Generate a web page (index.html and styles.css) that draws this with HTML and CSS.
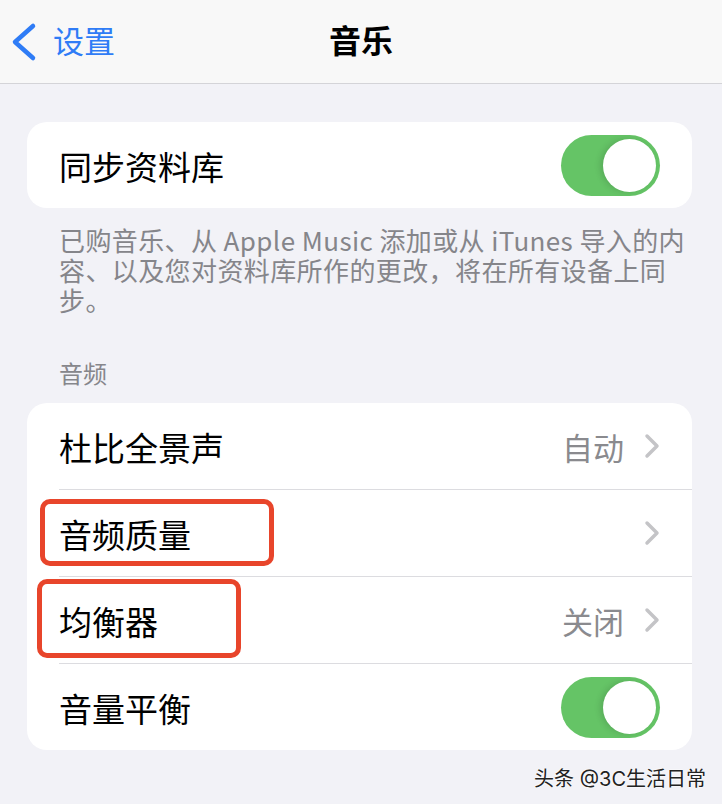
FILE: index.html
```html
<!DOCTYPE html>
<html lang="zh-CN">
<head>
<meta charset="UTF-8" />
<meta name="viewport" content="width=device-width, initial-scale=1.0" />
<title>音乐</title>
<link rel="stylesheet" href="styles.css">
</head>
<body>

<!-- Верхняя навигация -->
<header class="navbar">
  <a class="back" href="#settings">
    <svg class="back-icon" viewBox="0 0 26 40" width="26" height="40">
      <polyline points="22,4 4,20 22,36" />
    </svg>
    <span>设置</span>
  </a>
  <h1 class="title">音乐</h1>
  <span></span>
</header>

<main class="settings">

  <section class="group group-sync">
    <div class="card">
      <div class="row">
        <span class="label">同步资料库</span>
        <span class="switch on"><span class="knob"></span></span>
      </div>
    </div>
    <p class="group-footer">已购音乐、从 Apple Music 添加或从 iTunes 导入的内容、以及您对资料库所作的更改，将在所有设备上同步。</p>
  </section>

  <section class="group group-audio">
    <h2 class="group-header">音频</h2>
    <div class="card">
      <div class="row">
        <span class="label">杜比全景声</span>
        <span class="detail">自动<svg class="chevron" viewBox="0 0 16 26" width="16" height="26"><polyline points="3,3 13,13 3,23" /></svg></span>
      </div>
      <div class="row">
        <span class="label">音频质量</span>
        <span class="detail"><svg class="chevron" viewBox="0 0 16 26" width="16" height="26"><polyline points="3,3 13,13 3,23" /></svg></span>
        <span class="mark mark-quality"></span>
      </div>
      <div class="row">
        <span class="label">均衡器</span>
        <span class="detail">关闭<svg class="chevron" viewBox="0 0 16 26" width="16" height="26"><polyline points="3,3 13,13 3,23" /></svg></span>
        <span class="mark mark-eq"></span>
      </div>
      <div class="row">
        <span class="label">音量平衡</span>
        <span class="switch on"><span class="knob"></span></span>
      </div>
    </div>
  </section>

</main>

<div class="watermark">头条 @3C生活日常</div>

</body>
</html>
```

FILE: styles.css
```css
body {
  margin: 0;
  padding: 0;
  background-color: #f2f2f7;
  font-family: "Inter", "Noto Sans CJK SC", sans-serif;
  color: #000;
}
/* Навигация */
.navbar {
  height: 83px;
  background-color: #f8f8f8;
  border-bottom: 1px solid #d4d4d8;
  display: grid;
  grid-template-columns: 1fr auto 1fr;
  align-items: center;
}
.back {
  display: flex;
  align-items: center;
  padding-left: 11px;
  color: #2f7cf6;
  text-decoration: none;
  font-size: 31px;
  line-height: 40px;
}
.back span {
  margin-left: 16px;
}
.back-icon polyline {
  fill: none;
  stroke: #2f7cf6;
  stroke-width: 4.5;
  stroke-linecap: round;
  stroke-linejoin: round;
}
.title {
  margin: 0;
  font-size: 32px;
  font-weight: 700;
  line-height: 40px;
}
/* Группы */
.settings {
  padding: 38px 30px 0 27px;
}
.card {
  background-color: #fff;
  border-radius: 20px;
  overflow: hidden;
}
.row {
  position: relative;
  height: 86px;
  margin-left: 32px;
  padding-right: 32px;
  display: flex;
  align-items: center;
  justify-content: space-between;
}
.row + .row {
  border-top: 1px solid #dcdce0;
}
.label {
  padding-top: 6px;
  font-size: 33px;
  line-height: 40px;
}
.detail {
  display: flex;
  align-items: center;
  font-size: 31px;
  color: #8a8a8e;
}
.chevron {
  margin-left: 20px;
}
.chevron polyline {
  fill: none;
  stroke: #c4c4c7;
  stroke-width: 3.5;
  stroke-linecap: round;
  stroke-linejoin: round;
}
/* Переключатель */
.switch {
  width: 99px;
  height: 61px;
  border-radius: 31px;
  background-color: #e9e9eb;
  display: flex;
  align-items: center;
  padding: 0 4px;
  box-sizing: border-box;
}
.switch.on {
  background-color: #65c466;
  justify-content: flex-end;
}
.knob {
  width: 53px;
  height: 53px;
  border-radius: 50%;
  background-color: #fff;
  box-shadow: -3px 0 6px rgba(0, 0, 0, 0.12);
}
.group-footer {
  margin: 17px 0 0 32px;
  max-width: 630px;
  font-family: "Noto Sans CJK SC", sans-serif;
  font-size: 26px;
  line-height: 30px;
  letter-spacing: 0.4px;
  color: #85858a;
}
.group-audio {
  margin-top: 45px;
}
.group-header {
  margin: 0 0 13px 32px;
  font-size: 24px;
  font-weight: 400;
  line-height: 30px;
  color: #86868b;
}
/* Красные рамки поверх строк */
.mark {
  position: absolute;
  border: 5px solid #e8452b;
  border-radius: 10px;
  box-sizing: border-box;
}
.mark-quality {
  left: -19px;
  top: 9px;
  width: 234px;
  height: 67px;
}
.mark-eq {
  left: -22px;
  top: 2px;
  width: 204px;
  height: 79px;
}
.watermark {
  margin-top: 16px;
  padding-right: 16px;
  text-align: right;
  font-size: 20px;
  line-height: 26px;
  color: #222;
  text-shadow: 0 0 2px #fff, 0 0 2px #fff;
}
```
